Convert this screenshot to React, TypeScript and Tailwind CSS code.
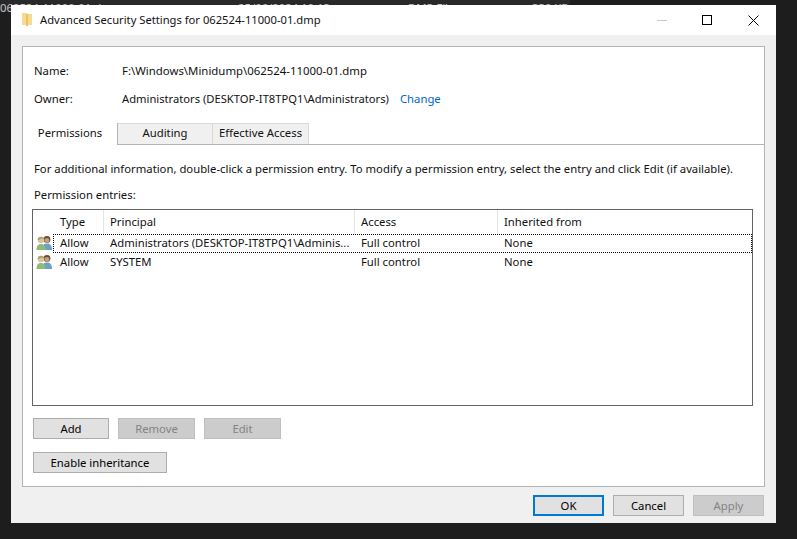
const font = "font-['Noto_Sans','Open_Sans',sans-serif]";

function UsersIcon() {
  return (
    <svg width="17" height="16" viewBox="0 0 17 16" className="shrink-0 -mt-[2px]">
      <circle cx="11" cy="4.5" r="3.4" fill="#5e4d40" />
      <circle cx="11" cy="5.5" r="2.4" fill="#c99f78" />
      <path d="M6 15 C6 9.5 8.5 8.5 11 8.5 C14 8.5 16 10 16 15 Z" fill="#6f9fcb" />
      <circle cx="5" cy="5" r="3.3" fill="#dcc4a0" />
      <path d="M1.7 5 C1.5 1 8 0.5 8.3 4.5 L5.5 3.5 L3 5 Z" fill="#a8a070" />
      <path d="M0.5 15 C0.5 10.5 2.5 9 5 9 C7.5 9 9.5 10.5 9.5 15 Z" fill="#8dbb7c" />
    </svg>
  );
}

function Btn({ label, w, disabled, primary }: { label: string; w: string; disabled?: boolean; primary?: boolean }) {
  return (
    <div
      className={`${w} h-[21px] flex items-center justify-center text-[11.3px] leading-none ${
        disabled
          ? "bg-[#cccccc] border border-[#bfbfbf] text-[#838383]"
          : primary
            ? "bg-[#e1e1e1] border-2 border-[#0078d7] text-black"
            : "bg-[#e1e1e1] border border-[#adadad] text-black"
      }`}
    >
      {label}
    </div>
  );
}

function Tab({ label, active, w }: { label: string; active?: boolean; w: string }) {
  return (
    <div
      className={`${w} flex items-center justify-center text-[11.3px] pb-[2px] ${
        active
          ? "h-[22px] bg-white border-r border-[#b4b4b4] -mb-px z-10"
          : "h-[21px] bg-[#f0f0f0] border-t border-r border-[#d9d9d9]"
      }`}
    >
      {label}
    </div>
  );
}

const cols = ["w-[50px]", "w-[251px]", "w-[143px]", "w-[248px]"];

function Row({ cells, focused }: { cells: string[]; focused?: boolean }) {
  return (
    <div className="flex h-[19px] items-center pl-[3px]">
      <UsersIcon />
      <div
        className={`flex flex-1 h-[19px] items-center border border-dotted ${
          focused ? "border-black" : "border-transparent"
        }`}
      >
        {cells.map((c, i) => (
          <div key={i} className={`${cols[i]} pl-[6px] whitespace-nowrap text-[11.3px]`}>
            {c}
          </div>
        ))}
      </div>
    </div>
  );
}

export default function App() {
  return (
    <div className={`relative w-[797px] h-[539px] overflow-hidden bg-[#1d1d1d] ${font} text-[#111111]`}>
      <div className="relative h-[12px] w-[570px] bg-[#292929] text-[#c4c4c4] text-[11.3px] leading-none overflow-hidden">
        <span className="absolute left-0 top-[2px] whitespace-nowrap">062524-11000-01.dmp</span>
        <span className="absolute left-[238px] top-[2px] whitespace-nowrap">25/06/2024 10:13</span>
        <span className="absolute left-[408px] top-[2px] whitespace-nowrap">DMP File</span>
        <span className="absolute left-[532px] top-[2px] whitespace-nowrap">330 KB</span>
      </div>
      <div className="absolute left-[11px] top-[5px] w-[765px] h-[518px] bg-[#f0f0f0] flex flex-col">
        <div className="h-[30px] bg-white flex items-center shrink-0">
          <svg width="10" height="13" viewBox="0 0 10 13" className="ml-[11px] mr-[8px] -mt-[2px]">
            <path d="M0 0 H5 V1 H10 V12 H0 Z" fill="#f7dc8f" />
            <path d="M4 1 H6 V13 H4 Z" fill="#e8c468" />
          </svg>
          <span className="text-[11.2px]">Advanced Security Settings for 062524-11000-01.dmp</span>
          <div className="ml-auto flex items-center">
            <div className="w-[10px] h-px bg-[#c8c8c8]" />
            <div className="w-[10px] h-[10px] border border-black ml-[35px]" />
            <svg width="11" height="11" viewBox="0 0 11 11" className="ml-[36px] mr-[17px]">
              <path d="M0.5 0.5 L10.5 10.5 M10.5 0.5 L0.5 10.5" stroke="#000" strokeWidth="1" />
            </svg>
          </div>
        </div>
        <div className="mx-[11px] mt-[11px] h-[441px] bg-white border border-[#b4b4b4] flex flex-col shrink-0">
          <div className="h-[76px] shrink-0 pt-[15px] pl-[11px] text-[11.3px]">
            <div className="flex h-[18px] items-center">
              <span className="w-[88px]">Name:</span>
              <span className="text-[11.4px]">F:\Windows\Minidump\062524-11000-01.dmp</span>
            </div>
            <div className="flex h-[18px] items-center mt-[10px]">
              <span className="w-[88px]">Owner:</span>
              <span className="text-[11.2px]">Administrators (DESKTOP-IT8TPQ1\Administrators)</span>
              <span className="ml-[11px] text-[#0066cc]">Change</span>
            </div>
          </div>
          <div className="flex items-end border-b border-[#b4b4b4] h-[22px] shrink-0">
            <Tab label="Permissions" active w="w-[95px]" />
            <Tab label="Auditing" w="w-[95px]" />
            <Tab label="Effective Access" w="w-[96px]" />
          </div>
          <div className="px-[9px] flex flex-col flex-1">
            <div className="text-[11.3px] h-[18px] mt-[15px] ml-[2px] flex items-center whitespace-nowrap">
              For additional information, double-click a permission entry. To modify a permission entry, select the entry and click Edit (if available).
            </div>
            <div className="text-[11.3px] h-[18px] mt-[8px] ml-[2px] flex items-center">Permission entries:</div>
            <div className="mt-[5px] h-[197px] w-[721px] border border-[#646464] bg-white">
              <div className="flex h-[24px] items-center pl-[21px]">
                {["Type", "Principal", "Access", "Inherited from"].map((h, i) => (
                  <div key={h} className={`${cols[i]} pl-[6px] h-full flex items-center text-[11.3px] border-r border-[#e5e5e5] last:border-r-0`}>
                    {h}
                  </div>
                ))}
              </div>
              <Row focused cells={["Allow", "Administrators (DESKTOP-IT8TPQ1\\Adminis...", "Full control", "None"]} />
              <Row cells={["Allow", "SYSTEM", "Full control", "None"]} />
            </div>
            <div className="flex gap-[9px] mt-[12px] ml-px">
              <Btn label="Add" w="w-[76px]" />
              <Btn label="Remove" w="w-[77px]" disabled />
              <Btn label="Edit" w="w-[77px]" disabled />
            </div>
            <div className="mt-[13px] ml-px">
              <Btn label="Enable inheritance" w="w-[134px]" />
            </div>
          </div>
        </div>
        <div className="flex justify-end gap-[9px] mr-[12px] mt-[8px]">
          <Btn label="OK" w="w-[71px]" primary />
          <Btn label="Cancel" w="w-[71px]" />
          <Btn label="Apply" w="w-[71px]" disabled />
        </div>
      </div>
    </div>
  );
}
